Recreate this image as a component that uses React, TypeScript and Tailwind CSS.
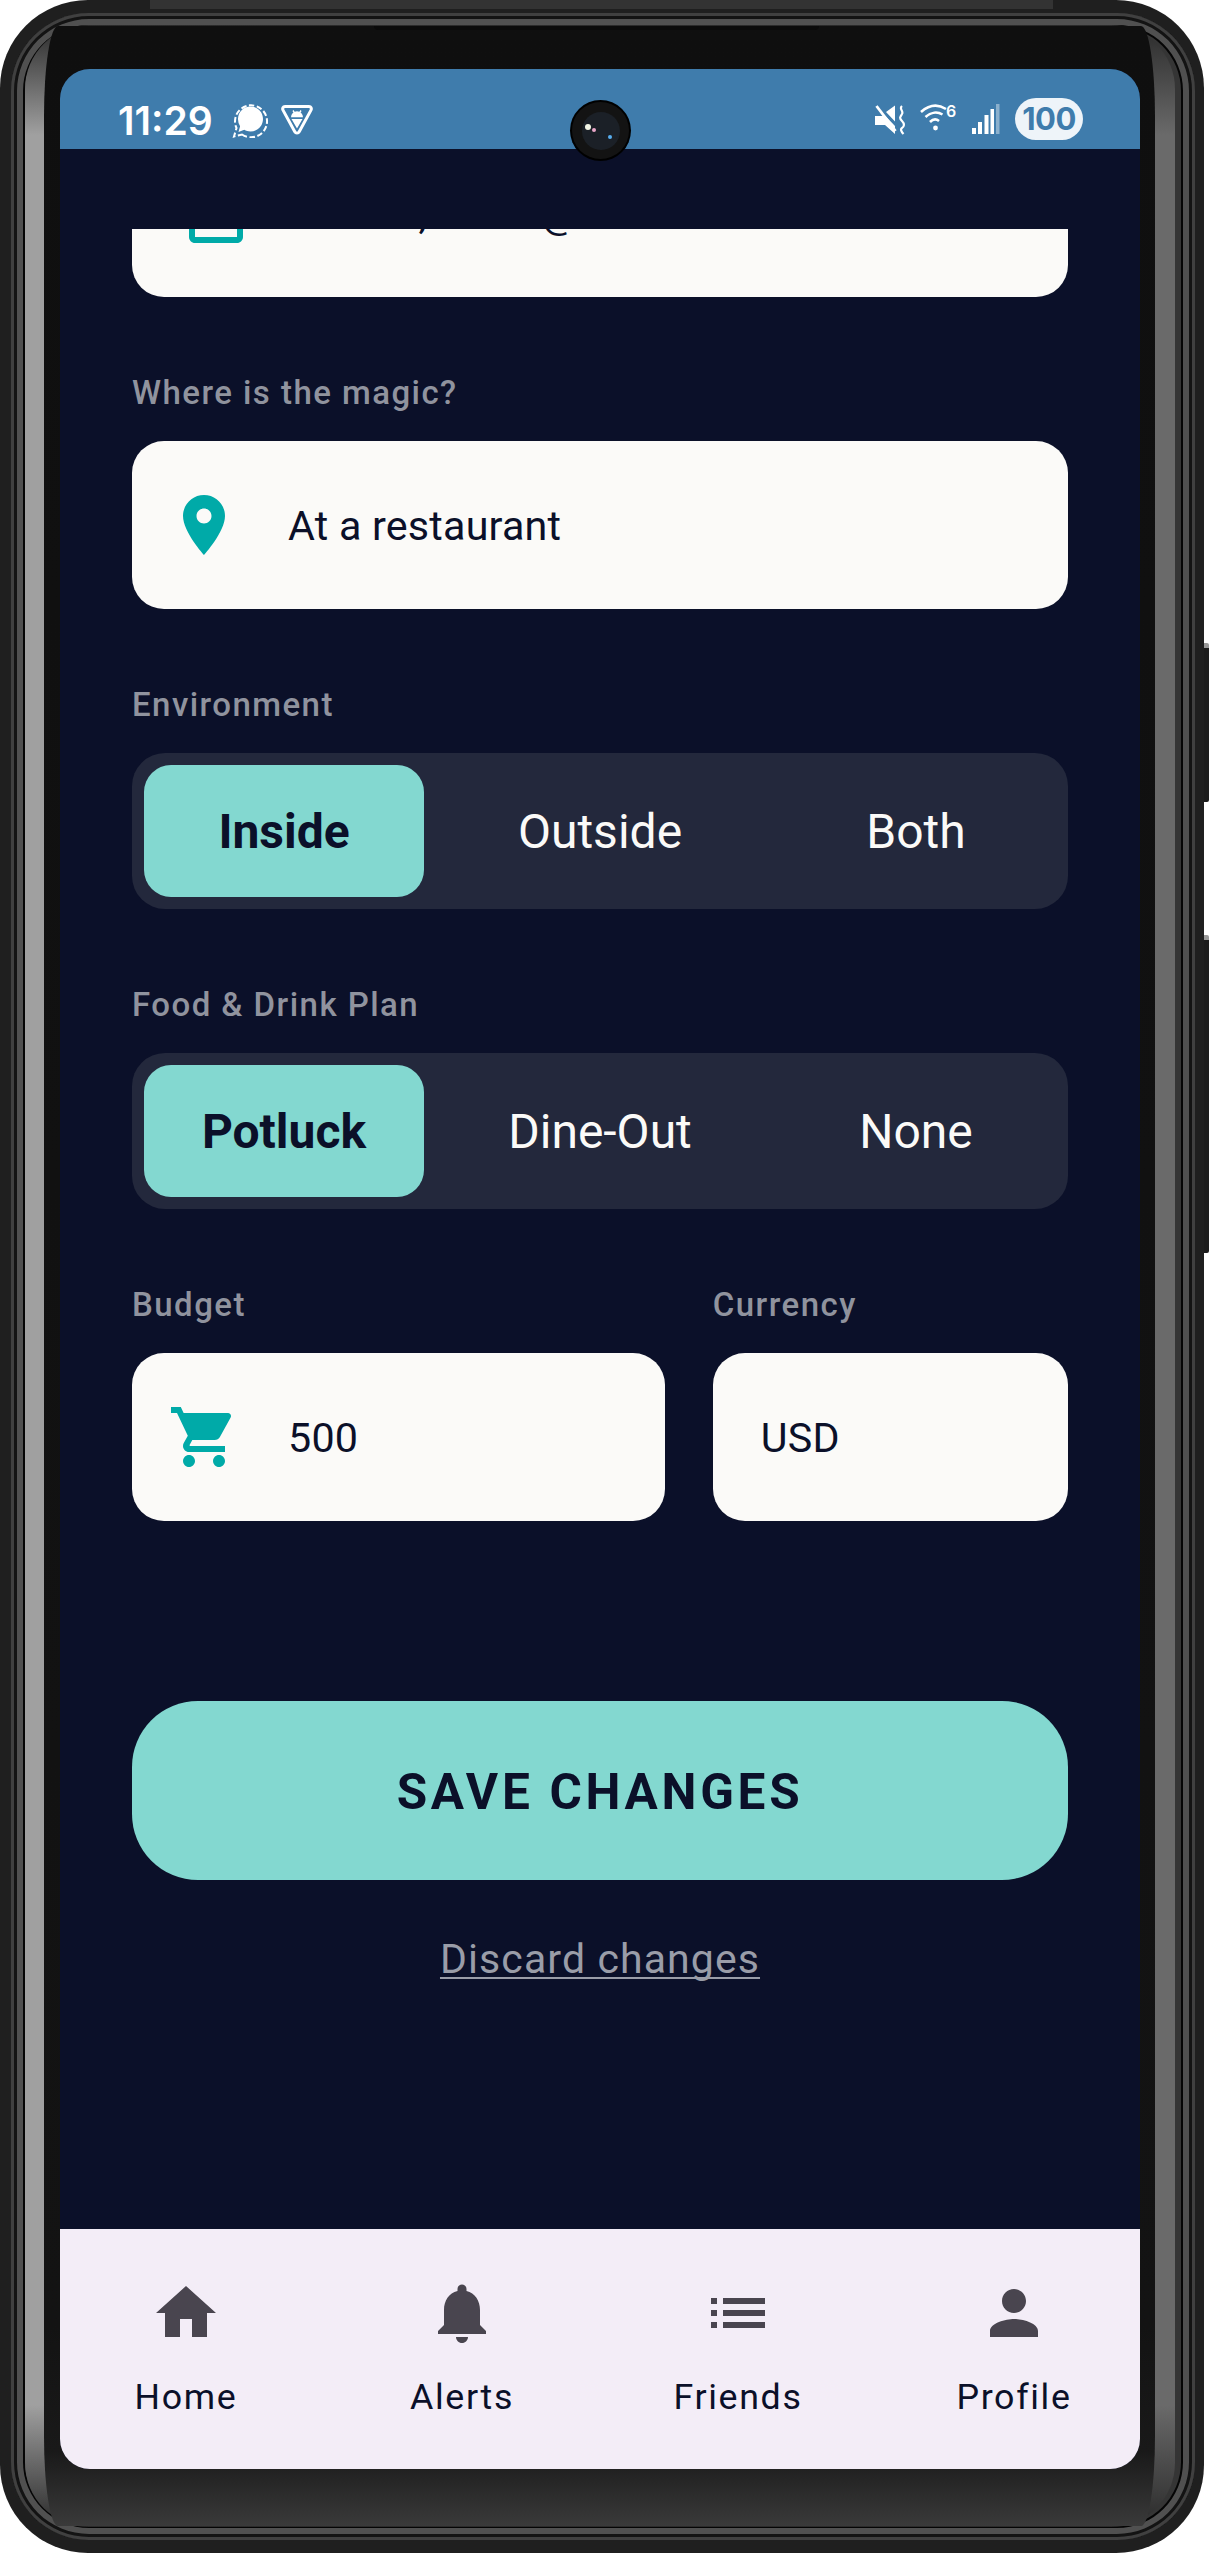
import React from "react";

function Md({ d, size = 72, className = "" }: { d: string; size?: number; className?: string }) {
  return (
    <svg width={size} height={size} viewBox="0 0 24 24" className={"shrink-0 fill-current " + className}>
      <path d={d} />
    </svg>
  );
}

const ICONS = {
  calendar: "M19 4h-1V2h-2v2H8V2H6v2H5c-1.1 0-2 .9-2 2v14c0 1.1.9 2 2 2h14c1.1 0 2-.9 2-2V6c0-1.1-.9-2-2-2zm0 16H5V9h14v11z",
  pin: "M12 2C8.13 2 5 5.13 5 9c0 5.25 7 13 7 13s7-7.75 7-13c0-3.87-3.13-7-7-7zm0 9.5c-1.38 0-2.5-1.12-2.5-2.5s1.12-2.5 2.5-2.5 2.5 1.12 2.5 2.5-1.12 2.5-2.5 2.5z",
  cart: "M7 18c-1.1 0-1.99.9-1.99 2S5.9 22 7 22s2-.9 2-2-.9-2-2-2zM1 2v2h2l3.6 7.59-1.35 2.45c-.16.28-.25.61-.25.96 0 1.1.9 2 2 2h12v-2H7.42c-.14 0-.25-.11-.25-.25l.03-.12.9-1.63h7.45c.75 0 1.41-.41 1.75-1.03l3.58-6.49c.08-.14.12-.31.12-.48 0-.55-.45-1-1-1H5.21l-.94-2H1zm16 16c-1.1 0-1.99.9-1.99 2s.89 2 1.99 2 2-.9 2-2-.9-2-2-2z",
  home: "M10 20v-6h4v6h5v-8h3L12 3 2 12h3v8z",
  bell: "M12 22c1.1 0 2-.9 2-2h-4c0 1.1.89 2 2 2zm6-6v-5c0-3.07-1.64-5.64-4.5-6.32V4c0-.83-.67-1.5-1.5-1.5s-1.5.67-1.5 1.5v.68C7.63 5.36 6 7.92 6 11v5l-2 2v1h16v-1l-2-2z",
  list: "M3 13h2v-2H3v2zm0 4h2v-2H3v2zm0-8h2V7H3v2zm4 4h14v-2H7v2zm0 4h14v-2H7v2zM7 7v2h14V7H7z",
  person: "M12 12c2.21 0 4-1.79 4-4s-1.79-4-4-4-4 1.79-4 4 1.79 4 4 4zm0 2c-2.67 0-8 1.34-8 4v2h16v-2c0-2.66-5.33-4-8-4z",
};

function Label({ children }: { children: React.ReactNode }) {
  return (
    <div className="mb-[27px] h-[44px] text-[33px] leading-[46px] font-medium tracking-[1.45px] text-[#90939e]">
      {children}
    </div>
  );
}

function Value({ children, className = "" }: { children: React.ReactNode; className?: string }) {
  return <span className={"pt-[3px] text-[41.25px] tracking-[0.2px] " + className}>{children}</span>;
}

function Segmented({ options }: { options: string[] }) {
  return (
    <div className="grid h-[156px] grid-cols-3 gap-[36px] rounded-[33px] bg-[#23283c] p-[12px]">
      {options.map((o, i) => (
        <div
          key={o}
          className={
            i === 0
              ? "flex items-center justify-center rounded-[27px] bg-[#83d8d0] pt-[2px] text-[48px] font-bold text-[#0b1029]"
              : "flex items-center justify-center pt-[2px] text-[48px] text-[#fbfaf8]"
          }
        >
          {o}
        </div>
      ))}
    </div>
  );
}

function SignalIcon() {
  return (
    <svg width="36" height="36" viewBox="0 0 36 36">
      <path d="M10 32.500A16 16 0 1 0 4.500 26L2 34.500z" fill="none" stroke="#fff" strokeWidth="2" strokeDasharray="5.500 2.500" />
      <path d="M18.500 4.500C25.500 4.500 31 10 31 17s-5.500 12.500-12.500 12.500c-2.300 0-4.400-.6-6.300-1.700L6.500 30l1.600-5.800A12.400 12.400 0 0 1 6 17C6 10 11.500 4.500 18.500 4.500z" fill="#fff" />
    </svg>
  );
}

function TriangleIcon() {
  return (
    <svg width="34" height="32" viewBox="0 0 34 32" className="ml-[12px] mt-[2px]">
      <path d="M5 2.500h24c2 0 3 2 2 3.600L19.200 27.800c-1 1.700-3.400 1.700-4.400 0L3 6.100C2 4.500 3 2.500 5 2.500z" fill="none" stroke="#fff" strokeWidth="3" strokeLinejoin="round" />
      <path d="M11 13.200a6 6 0 0 1 12 0zM11.500 15h11L17 24.500z" fill="#fff" />
      <path d="M13 6.500l1.800 2.800M21 6.500l-1.800 2.800" stroke="#fff" strokeWidth="1.400" />
    </svg>
  );
}

function MuteIcon() {
  return (
    <svg width="30" height="30" viewBox="0 0 30 30">
      <path d="M0 11h7l2-1.500L20 21v8L10 20H0zM11 7l9-6.500v16z" fill="#fff" />
      <path d="M1.500 1l19 25" stroke="#fff" strokeWidth="2.800" />
      <path d="M27 1c-3.500 3 2 5 0 8s-3 4 0 7 2 6 0 7-.5 4 1.500 6" fill="none" stroke="#fff" strokeWidth="2.200" />
    </svg>
  );
}

function WifiIcon() {
  return (
    <svg width="36" height="28" viewBox="0 0 36 28">
      <path d="M1 9c8-7 17-8 25-3M5.500 14c5.500-5 12-5.500 17-2.500M10 19c3-3 6.500-3 9-1" fill="none" stroke="#fff" strokeWidth="2.600" />
      <circle cx="15.500" cy="25" r="2.400" fill="#fff" />
      <text x="26" y="14" fill="#fff" fontSize="16" fontWeight="600" fontFamily="Inter, sans-serif">6</text>
    </svg>
  );
}

function BarsIcon() {
  return (
    <svg width="28" height="30" viewBox="0 0 28 30">
      <rect x="0" y="24" width="4" height="6" fill="#fff" />
      <rect x="6" y="18" width="4" height="12" fill="#fff" />
      <rect x="12.500" y="11" width="4" height="19" fill="#fff" />
      <rect x="18.500" y="5" width="3.500" height="25" fill="#fff" />
      <rect x="24" y="0" width="3.500" height="30" fill="#fff" fillOpacity="0.4" />
    </svg>
  );
}

function NavItem({ icon, label }: { icon: string; label: string }) {
  return (
    <div className="flex w-[200px] flex-col items-center">
      <Md d={icon} className="text-[#49454f]" />
      <div className="mt-[26px] text-[35.75px] leading-[44px] tracking-[1.65px] text-[#0b1029]">{label}</div>
    </div>
  );
}

export default function App() {
  return (
    <div className="relative h-[2553px] w-[1209px] overflow-hidden bg-white font-['Roboto',sans-serif]">
      {/* side buttons */}
      <div className="absolute right-0 top-[643px] h-[159px] w-[10px] rounded-r-[2px] border-t-[5px] border-[#9a9a9a] bg-[#1c1c1c]" />
      <div className="absolute right-0 top-[935px] h-[318px] w-[10px] rounded-r-[2px] border-t-[5px] border-[#9a9a9a] bg-[#1c1c1c]" />

      {/* phone body */}
      <div className="relative h-full w-[1204px] rounded-[88px] bg-[#1f1f1f] pb-[13px] pl-[11px] pr-[9px] pt-[13px]">
        <div className="absolute left-[150px] top-0 h-[9px] w-[903px] bg-[#333333]" />
        <div className="h-full rounded-[78px] bg-[#353535] pb-[13px] pl-[14px] pr-[20px] pt-[12px] shadow-[inset_0_0_0_3px_#404040,inset_0_0_0_6px_#131313,inset_0_0_0_12px_#505050,inset_0_0_0_14px_#050505]">
          {/* glass strip, shaded toward the corners */}
          <div className="relative h-full rounded-[64px] bg-[linear-gradient(to_bottom,#2a2a2a_0,#a0a0a0_110px,#a0a0a0_2380px,#2a2a2a_100%),linear-gradient(to_bottom,#2a2a2a_0,#6a6a6a_110px,#6a6a6a_2380px,#2a2a2a_100%)] bg-no-repeat bg-[length:50%_100%,50%_100%] bg-[position:0_0,100%_0] pb-[1px] pl-[19px] pr-[20px] pt-[1px]">
            <div className="relative h-full rounded-[14px/90px] bg-[linear-gradient(to_bottom,#0f0f0f_0%,#131313_92%,#191919_97%,#3a3a3a_100%)] pb-[57px] pl-[16px] pr-[15px] pt-[43px]">
              <div className="absolute left-[330px] top-0 h-[4px] w-[445px] rounded-b-[4px] bg-[#0a0a0a]" />

              {/* screen */}
              <div className="relative flex h-full flex-col overflow-hidden rounded-[30px] bg-[#0b1029]">
                {/* status bar */}
                <div className="flex h-[80px] shrink-0 items-start justify-between bg-[#3f7cac] pl-[58px] pr-[57px] pt-[33px] font-['Inter',sans-serif] text-white">
                  <div className="flex items-start">
                    <div className="text-[39px] font-semibold leading-[38px]">11:29</div>
                    <div className="ml-[19px] flex items-start">
                      <SignalIcon />
                      <TriangleIcon />
                    </div>
                  </div>
                  <div className="flex items-start">
                    <div className="mt-[3px]"><MuteIcon /></div>
                    <div className="ml-[15px] mt-[1px]"><WifiIcon /></div>
                    <div className="ml-[16px] mt-[2px]"><BarsIcon /></div>
                    <div className="-mt-[4px] ml-[15px] flex h-[42px] w-[68px] items-center justify-center rounded-[21px] bg-[#eef4f9] text-[31px] font-bold tracking-[-0.5px] text-[#3f7cac]">
                      100
                    </div>
                  </div>
                </div>

                {/* scrolled content */}
                <div className="mt-[80px] min-h-0 flex-1 overflow-hidden px-[72px] text-[#0b1029]">
                  <div className="-mt-[100px] flex h-[168px] items-center overflow-hidden whitespace-nowrap rounded-[32px] bg-[#fbfaf8] pl-[48px]">
                    <Md d={ICONS.calendar} className="text-[#00aaa8]" />
                    <Value className="ml-[36px]">Nov 24, 2025 @ 7:00 PM</Value>
                  </div>

                  <div className="mt-[73px]">
                    <Label>Where is the magic?</Label>
                    <div className="flex h-[168px] items-center rounded-[32px] bg-[#fbfaf8] pl-[36px]">
                      <Md d={ICONS.pin} className="text-[#00aaa8]" />
                      <Value className="ml-[48px]">At a restaurant</Value>
                    </div>
                  </div>

                  <div className="mt-[73px]">
                    <Label>Environment</Label>
                    <Segmented options={["Inside", "Outside", "Both"]} />
                  </div>

                  <div className="mt-[73px]">
                    <Label>Food &amp; Drink Plan</Label>
                    <Segmented options={["Potluck", "Dine-Out", "None"]} />
                  </div>

                  <div className="mt-[73px] flex gap-[48px]">
                    <div className="flex-[3]">
                      <Label>Budget</Label>
                      <div className="flex h-[168px] items-center rounded-[32px] bg-[#fbfaf8] pl-[36px]">
                        <Md d={ICONS.cart} className="text-[#00aaa8]" />
                        <Value className="ml-[48px]">500</Value>
                      </div>
                    </div>
                    <div className="flex-[2]">
                      <Label>Currency</Label>
                      <div className="flex h-[168px] items-center rounded-[32px] bg-[#fbfaf8] pl-[48px]">
                        <Value>USD</Value>
                      </div>
                    </div>
                  </div>

                  <div className="mt-[180px] flex h-[179px] items-center justify-center rounded-[66px] bg-[#83d8d0] pt-[3px] text-[49.5px] font-bold tracking-[3.7px] text-[#0b1029]">
                    SAVE CHANGES
                  </div>
                  <div className="mt-[53px] text-center text-[41px] leading-[52px] tracking-[1.1px] text-[#9a9da8] underline decoration-2 underline-offset-[4px] [text-decoration-skip-ink:none]">
                    Discard changes
                  </div>
                </div>

                {/* bottom navigation */}
                <div className="flex h-[240px] shrink-0 justify-between bg-[#f3edf7] px-[26px] pt-[48px]">
                  <NavItem icon={ICONS.home} label="Home" />
                  <NavItem icon={ICONS.bell} label="Alerts" />
                  <NavItem icon={ICONS.list} label="Friends" />
                  <NavItem icon={ICONS.person} label="Profile" />
                </div>

                {/* camera */}
                <div className="absolute left-[510px] top-[31px] flex h-[61px] w-[61px] items-center justify-center rounded-full bg-black">
                  <div className="relative flex h-[57px] w-[57px] items-center justify-center rounded-full bg-[#131313]">
                    <div className="h-[38px] w-[38px] rounded-full bg-[#1b2027]" />
                    <div className="absolute left-[13px] top-[22px] h-[6px] w-[6px] rounded-full bg-[#f2f4e4]" />
                    <div className="absolute left-[20px] top-[26px] h-[4px] w-[4px] rounded-full bg-[#e9a6c8]" />
                    <div className="absolute left-[36px] top-[33px] h-[4px] w-[4px] rounded-full bg-[#58aef0]" />
                  </div>
                </div>
              </div>
            </div>
          </div>
        </div>
      </div>
    </div>
  );
}
